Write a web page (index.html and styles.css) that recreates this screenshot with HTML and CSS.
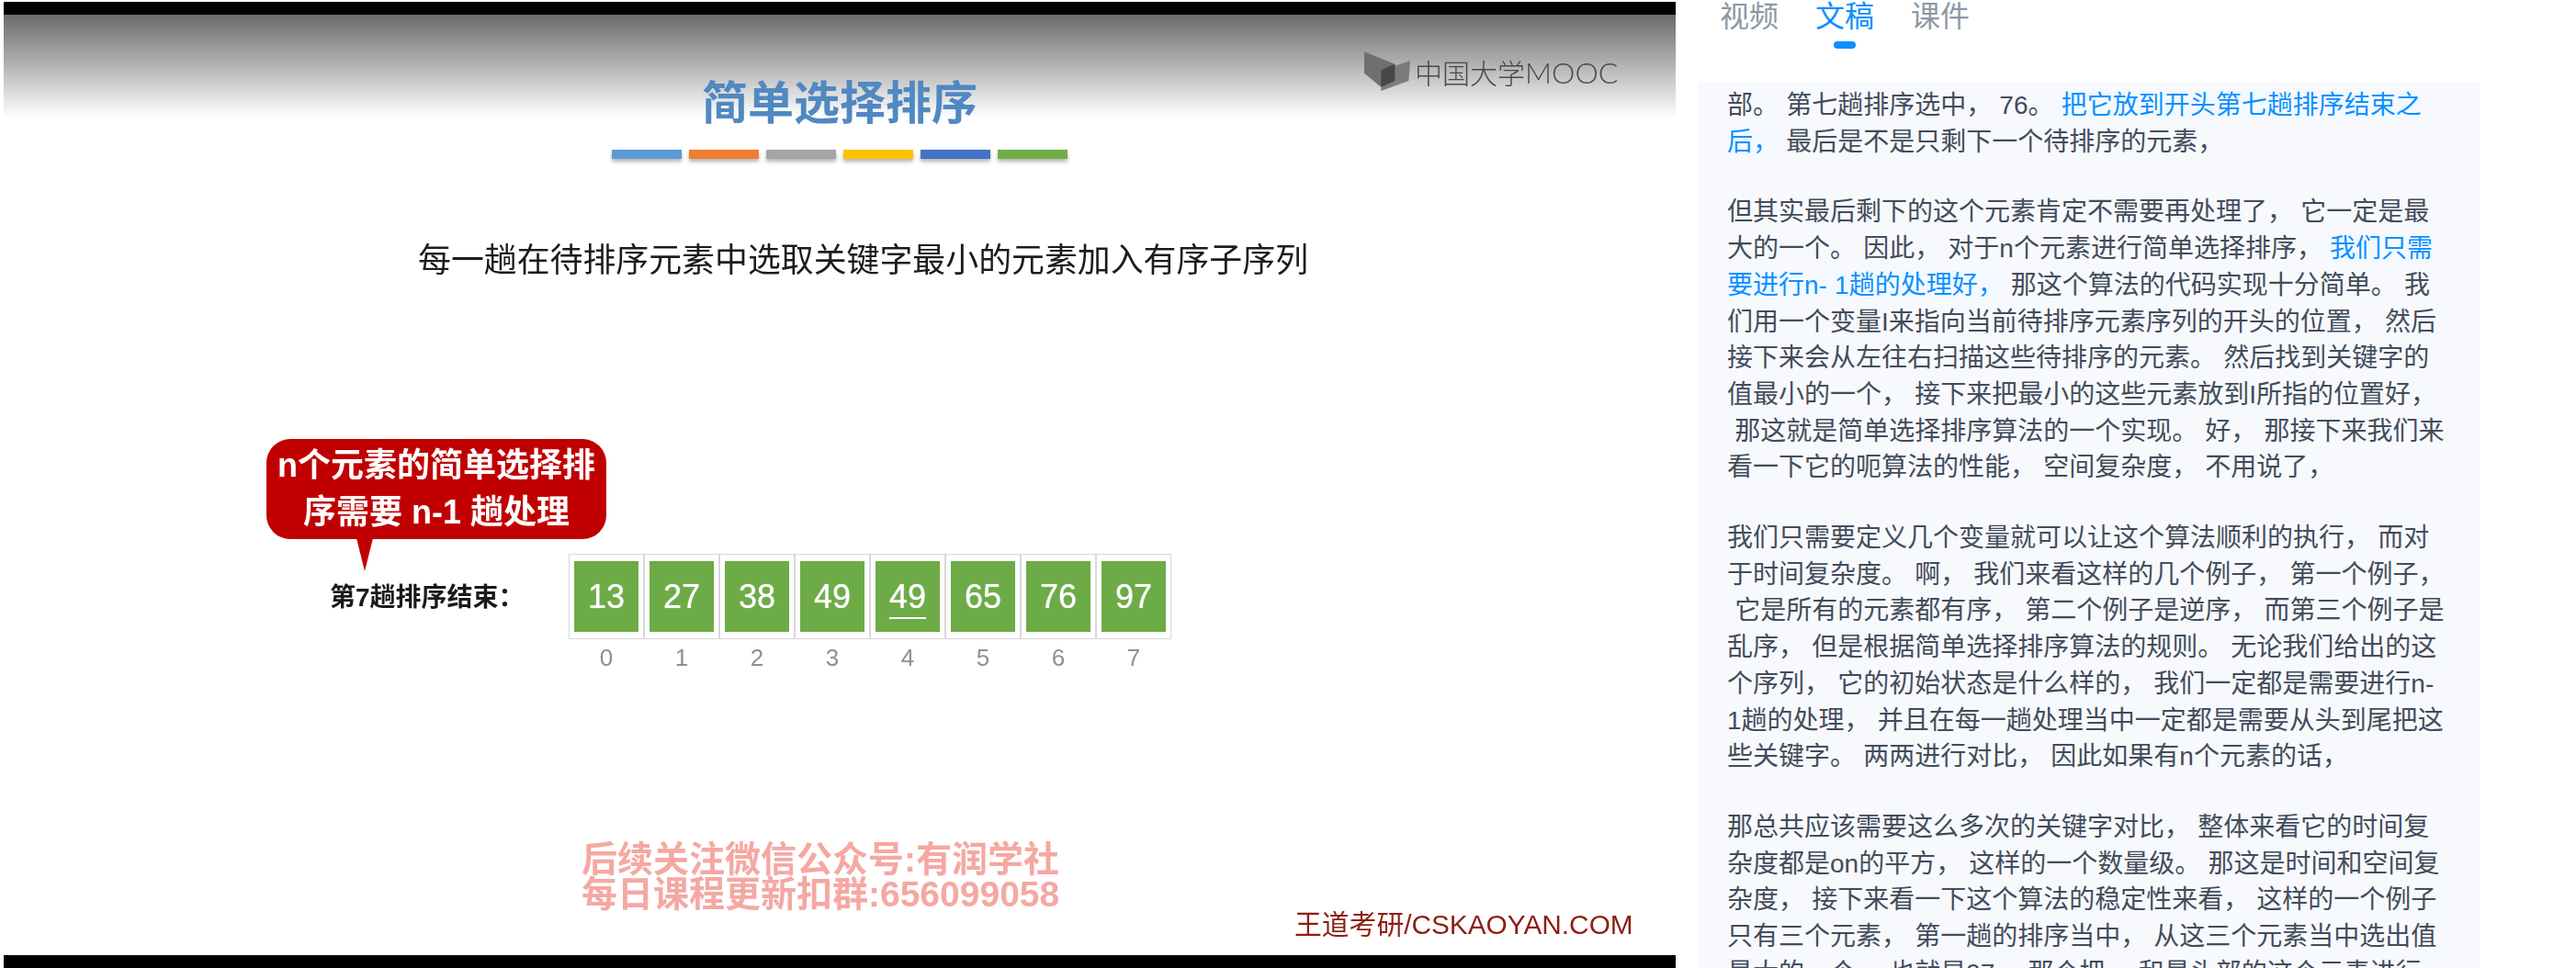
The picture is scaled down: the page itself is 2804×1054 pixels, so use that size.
FILE: index.html
```html
<!DOCTYPE html>
<html>
<head>
	<meta charset="utf-8">
	<title>简单选择排序</title>
	<link rel="stylesheet" href="styles.css">
</head>
<body>
	<div class="player">
		<div class="black-bar"></div>
		<div class="slide">
			<div class="logo">
				<svg class="logo-mark" width="50" height="44" viewBox="0 0 150 130">
					<polygon points="0,0 100,40 100,95 55,115 0,70" fill="#6f6f6f"/>
					<polygon points="55,60 150,30 145,95 55,128" fill="#7c7c7c"/>
					<polygon points="55,60 100,40 100,95 55,115" fill="#464646"/>
				</svg>
				<span class="logo-cn">中国大学</span><span class="logo-en">MOOC</span>
			</div>
			<h1 class="slide-title">简单选择排序</h1>
			<div class="color-bars">
				<span class="c-blue"></span>
				<span class="c-orange"></span>
				<span class="c-gray"></span>
				<span class="c-yellow"></span>
				<span class="c-navy"></span>
				<span class="c-green"></span>
			</div>
			<p class="slide-sub">每一趟在待排序元素中选取关键字最小的元素加入有序子序列</p>
			<div class="demo">
				<div class="callout">n个元素的简单选择排<br>序需要 n-1 趟处理</div>
				<div class="demo-row">
					<div class="demo-label">第7趟排序结束：</div>
					<div class="array">
						<div class="cell"><b>13</b></div>
						<div class="cell"><b>27</b></div>
						<div class="cell"><b>38</b></div>
						<div class="cell"><b>49</b></div>
						<div class="cell"><b class="dup">49</b></div>
						<div class="cell"><b>65</b></div>
						<div class="cell"><b>76</b></div>
						<div class="cell"><b>97</b></div>
						<span class="idx">0</span>
						<span class="idx">1</span>
						<span class="idx">2</span>
						<span class="idx">3</span>
						<span class="idx">4</span>
						<span class="idx">5</span>
						<span class="idx">6</span>
						<span class="idx">7</span>
					</div>
				</div>
			</div>
			<div class="watermark">后续关注微信公众号:有润学社<br>每日课程更新扣群:656099058</div>
			<div class="brand">王道考研/CSKAOYAN.COM</div>
		</div>
		<div class="black-bar"></div>
	</div>

	<div class="side">
		<div class="tabs">
			<div class="tab">视频</div>
			<div class="tab active">文稿</div>
			<div class="tab">课件</div>
		</div>
		<div class="transcript">
			<p>部。 第七趟排序选中， 76。<span class="hl"> 把它放到开头第七趟排序结束之<br>后，</span> 最后是不是只剩下一个待排序的元素，</p>
			<p>但其实最后剩下的这个元素肯定不需要再处理了， 它一定是最<br>
			大的一个。 因此， 对于n个元素进行简单选择排序，<span class="hl"> 我们只需<br>
			要进行n- 1趟的处理好，</span> 那这个算法的代码实现十分简单。 我<br>
			们用一个变量I来指向当前待排序元素序列的开头的位置， 然后<br>
			接下来会从左往右扫描这些待排序的元素。 然后找到关键字的<br>
			值最小的一个， 接下来把最小的这些元素放到I所指的位置好，<br>
			&nbsp;那这就是简单选择排序算法的一个实现。 好， 那接下来我们来<br>
			看一下它的呃算法的性能， 空间复杂度， 不用说了，</p>
			<p>我们只需要定义几个变量就可以让这个算法顺利的执行， 而对<br>
			于时间复杂度。 啊， 我们来看这样的几个例子， 第一个例子，<br>
			&nbsp;它是所有的元素都有序， 第二个例子是逆序， 而第三个例子是<br>
			乱序， 但是根据简单选择排序算法的规则。 无论我们给出的这<br>
			个序列， 它的初始状态是什么样的， 我们一定都是需要进行n-<br>
			1趟的处理， 并且在每一趟处理当中一定都是需要从头到尾把这<br>
			些关键字。 两两进行对比， 因此如果有n个元素的话，</p>
			<p>那总共应该需要这么多次的关键字对比， 整体来看它的时间复<br>
			杂度都是on的平方， 这样的一个数量级。 那这是时间和空间复<br>
			杂度， 接下来看一下这个算法的稳定性来看， 这样的一个例子<br>
			只有三个元素， 第一趟的排序当中， 从这三个元素当中选出值<br>
			最大的一个， 也就是97， 那个把， 和最头部的这个元素进行</p>
		</div>
	</div>
</body>
</html>
```

FILE: styles.css
```css
* {
	box-sizing: border-box;
	margin: 0;
	padding: 0;
}

html, body {
	height: 1054px;
	overflow: hidden;
}

body {
	display: flex;
	align-items: flex-start;
	background-color: #fff;
	font-family: "Liberation Sans", "Noto Sans CJK SC", sans-serif;
}

/* video frame */
.player {
	display: flex;
	flex-direction: column;
	width: 1820px;
	height: 1052px;
	margin: 2px 0 0 4px;
}

.black-bar {
	height: 14px;
	flex-shrink: 0;
	background-color: #000;
}

.slide {
	position: relative;
	flex: 1;
	display: flex;
	flex-direction: column;
	align-items: center;
	background: #fff linear-gradient(#6a6a6a, #fff) no-repeat;
	background-size: 100% 112px;
}

.slide > * {
	filter: blur(0.7px);
}

.logo {
	position: absolute;
	left: 1481px;
	top: 40px;
	display: flex;
	align-items: center;
	color: #4a4a4a;
}

.logo-mark {
	margin-right: 5px;
}

.logo-cn {
	font-size: 30px;
	font-family: "Noto Sans CJK SC", sans-serif;
	font-weight: 300;
}

.logo-en {
	font-family: Lato, sans-serif;
	font-size: 32px;
	font-weight: 300;
}

.slide-title {
	margin-top: 67px;
	font-family: "Noto Sans CJK SC", sans-serif;
	font-size: 50px;
	line-height: 50px;
	font-weight: 700;
	color: #5089c2;
}

.color-bars {
	display: flex;
	gap: 8px;
	margin-top: 30px;
}

.color-bars span {
	display: block;
	width: 76px;
	height: 10px;
	box-shadow: 0 3px 4px rgba(0, 0, 0, 0.3);
}

.c-blue { background-color: #5b9bd5; }
.c-orange { background-color: #ed7d31; }
.c-gray { background-color: #a5a5a5; }
.c-yellow { background-color: #ffc000; }
.c-navy { background-color: #4472c4; }
.c-green { background-color: #70ad47; }

.slide-sub {
	align-self: flex-start;
	margin: 87px 0 0 451px;
	font-family: "Noto Sans CJK SC", sans-serif;
	font-size: 35.9px;
	line-height: 40px;
	color: #1c1c1c;
	white-space: nowrap;
}

.demo {
	align-self: flex-start;
	margin: 178px 0 0 286px;
}

.callout {
	position: relative;
	width: 370px;
	height: 109px;
	padding-top: 3px;
	border-radius: 26px;
	background-color: #c00000;
	color: #fff;
	font-size: 36px;
	line-height: 51px;
	font-weight: 700;
	text-align: center;
	white-space: nowrap;
}

.callout::after {
	content: "";
	position: absolute;
	left: 98px;
	top: 108px;
	border-style: solid;
	border-width: 36px 9px 0;
	border-color: #c00000 transparent transparent;
}

.demo-row {
	display: flex;
	margin-top: 16px;
}

.demo-label {
	width: 329px;
	padding: 30px 0 0 69px;
	font-size: 28px;
	line-height: 36px;
	font-weight: 700;
	color: #1a1a1a;
	white-space: nowrap;
}

.array {
	display: grid;
	grid-template-columns: repeat(8, 82px);
}

.cell {
	height: 93px;
	padding: 7px 5px;
	border: 1px solid #d8d8d8;
}

.cell b {
	display: block;
	height: 100%;
	background-color: #6dab47;
	color: #fff;
	font-size: 36px;
	font-weight: 400;
	line-height: 77px;
	text-align: center;
	text-shadow: 0 0 1px #fff;
}

.cell .dup {
	text-decoration: underline;
	text-decoration-thickness: 2px;
	text-underline-offset: 10px;
}

.idx {
	margin-top: 4px;
	color: #8f8f8f;
	font-size: 26px;
	line-height: 32px;
	text-align: center;
}

.watermark {
	position: absolute;
	left: 629px;
	top: 901px;
	color: #f5a8a2;
	font-size: 39px;
	line-height: 38px;
	font-weight: 700;
	white-space: nowrap;
}

.brand {
	position: absolute;
	left: 1405px;
	top: 973px;
	color: #8c1f12;
	font-size: 29.8px;
	line-height: 36px;
	white-space: nowrap;
}

/* right column */
.side {
	width: 851px;
	height: 1054px;
	margin-left: 24px;
}

.tabs {
	display: flex;
	gap: 40px;
	height: 90px;
	padding-left: 24px;
}

.tab {
	font-size: 32px;
	line-height: 36px;
	color: #8d97a5;
}

.tab.active {
	color: #0a90ff;
}

.tab.active::after {
	content: "";
	display: block;
	width: 24px;
	height: 8px;
	margin: 9px auto 0;
	border-radius: 4px;
	background-color: #0a90ff;
}

.transcript {
	height: 964px;
	padding: 5px 32px 0;
	overflow: hidden;
	background-color: #f7f9fd;
	color: #434c5b;
	font-size: 28px;
	line-height: 39.7px;
	word-spacing: 0.4px;
	white-space: nowrap;
}

.transcript p {
	margin-bottom: 37px;
}

.hl {
	color: #0a90ff;
	background-color: #f3f9ff;
}
```
